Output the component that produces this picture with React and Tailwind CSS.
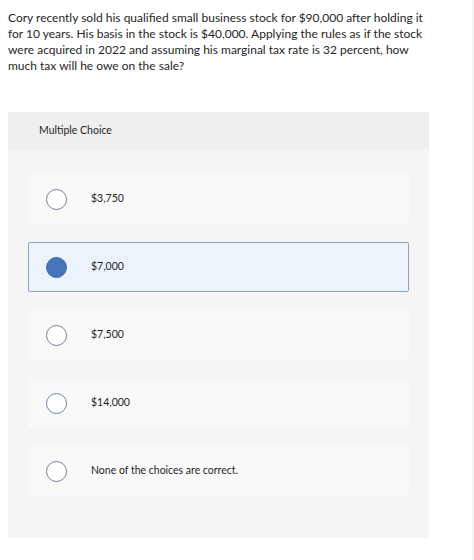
import React from "react";

const options = [
  { label: "$3,750", selected: false },
  { label: "$7,000", selected: true },
  { label: "$7,500", selected: false },
  { label: "$14,000", selected: false },
  { label: "None of the choices are correct.", selected: false },
];

function Option({ label, selected }) {
  return (
    <div
      className={
        selected
          ? "h-[50px] flex items-center rounded-[2px] border border-[#90a3be] bg-[#edf3fb]"
          : "h-[50px] flex items-center rounded-[2px] border border-transparent bg-[#f9f9f9]"
      }
    >
      <div
        className={
          selected
            ? "ml-[17px] w-[21px] h-[21px] rounded-full border border-[#3d69aa] bg-[#4674b9] shrink-0"
            : "ml-[17px] w-[21px] h-[21px] rounded-full border border-[#6f8299] bg-white shrink-0"
        }
      />
      <span className="ml-[24px] text-[10.5px] text-[#1f1f1f]">{label}</span>
    </div>
  );
}

export default function App() {
  return (
    <div className="w-[474px] h-[560px] bg-white flex font-['Lato',sans-serif]">
      <div className="flex-1">
        <p className="px-2 pt-[10px] text-[12px] leading-4 text-[#262626] whitespace-nowrap">
          Cory recently sold his qualified small business stock for $90,000 after holding it
          <br />
          for 10 years. His basis in the stock is $40,000. Applying the rules as if the stock
          <br />
          were acquired in 2022 and assuming his marginal tax rate is 32 percent, how
          <br />
          much tax will he owe on the sale?
        </p>
        <div className="ml-2 mt-[38px] w-[421px] bg-[#f5f5f5]">
          <div className="h-[38px] bg-[#efefef] flex items-center pl-[31px] text-[10.5px] text-[#1f1f1f]">
            Multiple Choice
          </div>
          <div className="px-5 pt-6 pb-[42px] flex flex-col gap-[18px]">
            {options.map((o) => (
              <Option key={o.label} {...o} />
            ))}
          </div>
        </div>
      </div>
      <div className="w-[2px] bg-[#f2f2f2]" />
    </div>
  );
}
